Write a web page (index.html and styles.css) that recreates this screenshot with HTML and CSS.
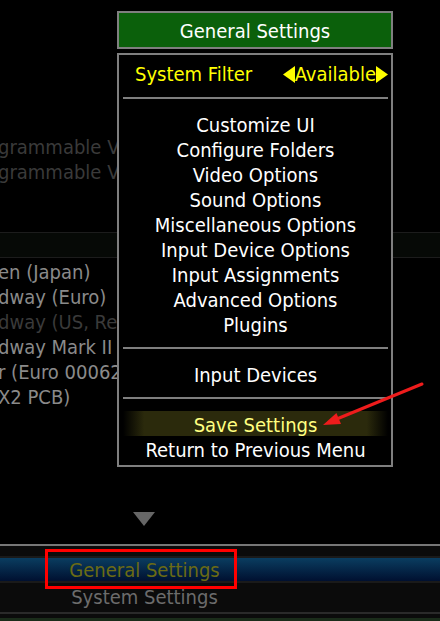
FILE: index.html
```html
<!DOCTYPE html>
<html>
<head>
<meta charset="utf-8">
<link rel="stylesheet" href="styles.css">
</head>
<body>
<div class="screen">
  <div class="bg">
    <div class="list list-top">
      <div class="row dim">grammable V</div>
      <div class="row dim">grammable V</div>
    </div>
    <div class="band"></div>
    <div class="list list-games">
      <div class="row">en (Japan)</div>
      <div class="row">dway (Euro)</div>
      <div class="row dim">dway (US, Re</div>
      <div class="row">dway Mark II</div>
      <div class="row">r (Euro 00062</div>
      <div class="row">X2 PCB)</div>
    </div>
    <div class="more"></div>
    <div class="rule"></div>
    <div class="bottom">
      <div class="cats">
        <div class="cat sel">General Settings</div>
        <div class="cat">System Settings</div>
      </div>
      <div class="bottom-line"></div>
      <div class="bottom-green"></div>
    </div>
  </div>

  <div class="menu">
    <div class="menu-title">General Settings</div>
    <div class="menu-box">
      <div class="item filter">
        <span class="filter-label">System Filter</span>
        <span class="filter-value">
          <svg class="tri" width="12" height="17" viewBox="0 0 12 17"><polygon points="12,0 12,17 0,8.5" fill="#ffff00"/></svg>Available<svg class="tri" width="12" height="17" viewBox="0 0 12 17"><polygon points="0,0 0,17 12,8.5" fill="#ffff00"/></svg>
        </span>
      </div>
      <div class="sep"></div>
      <div class="item">Customize UI</div>
      <div class="item">Configure Folders</div>
      <div class="item">Video Options</div>
      <div class="item">Sound Options</div>
      <div class="item">Miscellaneous Options</div>
      <div class="item">Input Device Options</div>
      <div class="item">Input Assignments</div>
      <div class="item">Advanced Options</div>
      <div class="item">Plugins</div>
      <div class="sep"></div>
      <div class="item">Input Devices</div>
      <div class="sep"></div>
      <div class="item hl">Save Settings</div>
      <div class="item">Return to Previous Menu</div>
    </div>
  </div>

  <div class="annot-box"></div>
  <svg class="annot-arrow" width="440" height="621" viewBox="0 0 440 621">
    <line x1="422" y1="384" x2="338" y2="418.5" stroke="#ee1c1c" stroke-width="3" stroke-linecap="round"/>
    <polygon points="323,425 341,424 336.4,413" fill="#ee1c1c"/>
  </svg>
</div>
</body>
</html>
```
FILE: styles.css
```css
html, body {
  margin: 0;
  padding: 0;
  background: #000;
}
.screen {
  position: relative;
  width: 440px;
  height: 621px;
  overflow: hidden;
  background: #000;
  font-family: "DejaVu Sans Condensed", "DejaVu Sans", sans-serif;
  font-size: 20px;
}
.bg {
  display: flex;
  flex-direction: column;
  height: 621px;
}
.list {
  width: 118px;
  overflow: hidden;
}
.row {
  box-sizing: border-box;
  height: 25px;
  padding-top: 3px;
  line-height: 22px;
  white-space: nowrap;
  color: #8a8a8a;
  margin-left: -2px;
}
.row.dim {
  color: #3a3a3a;
}
.list-top {
  padding-top: 133px;
}
.band {
  margin-top: 49px;
  height: 24px;
  border-top: 1px solid #1c1c1c;
  border-bottom: 1px solid #1c1c1c;
  background: #060906;
}
.more {
  margin-top: 104px;
  margin-left: 133px;
  width: 0;
  height: 0;
  border-left: 11px solid transparent;
  border-right: 11px solid transparent;
  border-top: 14px solid #666;
}
.rule {
  margin-top: 18px;
  height: 2px;
  background: #777;
}
.bottom {
  flex: 1;
  background: #0b0b0b;
  display: flex;
  flex-direction: column;
  padding-top: 10px;
}
.cats {
  display: flex;
  flex-direction: column;
}
.cat {
  box-sizing: border-box;
  width: 289px;
  text-align: center;
  height: 25px;
  padding-top: 3px;
  line-height: 22px;
  color: #6c6c6c;
  white-space: nowrap;
}
.cat.sel {
  box-sizing: content-box;
  width: auto;
  padding-right: 151px;
  height: 21px;
  padding-top: 2px;
  line-height: 21px;
  color: #6b6b14;
  border-top: 2px solid #1a1a1a;
  border-bottom: 2px solid #1a1a1a;
  background: linear-gradient(#0a3d60, #001030);
}
.bottom-line {
  margin-top: 4px;
  height: 2px;
  background: #2a2a2a;
}
.bottom-green {
  margin-top: 4px;
  flex: 1;
  background: #1a2c1a;
}

/* menu overlay */
.menu {
  position: absolute;
  left: 117px;
  top: 11px;
  width: 276px;
  display: flex;
  flex-direction: column;
  gap: 4px;
}
.menu-title {
  box-sizing: border-box;
  height: 38px;
  line-height: 36px;
  border: 2px solid #7f7f7f;
  background: #0b600b;
  color: #fff;
  text-align: center;
}
.menu-box {
  box-sizing: border-box;
  height: 414px;
  border: 2px solid #7f7f7f;
  background: #000;
  padding: 6px 3px 4px 4px;
  display: flex;
  flex-direction: column;
}
.item {
  box-sizing: border-box;
  height: 25px;
  padding-top: 3px;
  line-height: 22px;
  color: #fff;
  text-align: center;
  white-space: nowrap;
}
.item.filter {
  display: flex;
  justify-content: space-between;
  align-items: center;
  color: #ffff00;
  padding-left: 12px;
  padding-top: 1px;
}
.filter-value {
  display: flex;
  align-items: center;
}
.tri {
  display: block;
}
.sep {
  height: 25px;
  display: flex;
  align-items: center;
}
.sep::before {
  content: "";
  display: block;
  width: 100%;
  height: 2px;
  background: #7f7f7f;
  margin-top: -1px;
}
.item.hl {
  color: #ffff80;
  background: linear-gradient(to right, rgba(43, 42, 12, 0) 0%, #2b2a0c 8%, #2b2a0c 92%, rgba(43, 42, 12, 0) 100%);
}

/* annotations */
.annot-box {
  position: absolute;
  left: 45px;
  top: 549px;
  width: 192px;
  height: 40px;
  box-sizing: border-box;
  border: 3px solid #f00;
}
.annot-arrow {
  position: absolute;
  left: 0;
  top: 0;
  pointer-events: none;
}
```
